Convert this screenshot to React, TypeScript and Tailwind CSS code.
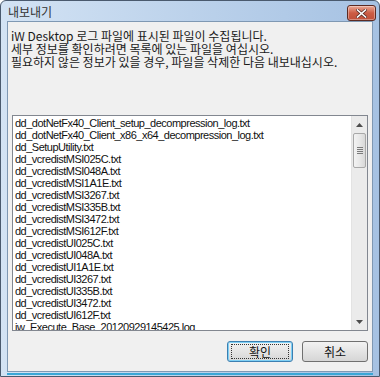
import React from 'react';

const files = [
  'dd_dotNetFx40_Client_setup_decompression_log.txt',
  'dd_dotNetFx40_Client_x86_x64_decompression_log.txt',
  'dd_SetupUtility.txt',
  'dd_vcredistMSI025C.txt',
  'dd_vcredistMSI048A.txt',
  'dd_vcredistMSI1A1E.txt',
  'dd_vcredistMSI3267.txt',
  'dd_vcredistMSI335B.txt',
  'dd_vcredistMSI3472.txt',
  'dd_vcredistMSI612F.txt',
  'dd_vcredistUI025C.txt',
  'dd_vcredistUI048A.txt',
  'dd_vcredistUI1A1E.txt',
  'dd_vcredistUI3267.txt',
  'dd_vcredistUI335B.txt',
  'dd_vcredistUI3472.txt',
  'dd_vcredistUI612F.txt',
  'iw_Execute_Base_20120929145425.log',
];

const korean = { fontFamily: '"Noto Sans CJK KR", sans-serif' };

function CloseButton() {
  return (
    <div className="absolute right-[3px] top-[4px] flex h-[16px] w-[29px] items-center justify-center rounded-[3px] border border-[#5c2a22] bg-gradient-to-b from-[#e9a896] via-[#cc5c44] to-[#c0503a] shadow-[inset_0_0_0_1px_rgba(255,255,255,0.35)]">
      <svg width="11" height="9" viewBox="0 0 11 9">
        <path d="M1.5 1 L9.5 8 M9.5 1 L1.5 8" stroke="#5a2d28" strokeWidth="3" strokeLinecap="square" />
        <path d="M1.5 1 L9.5 8 M9.5 1 L1.5 8" stroke="#ffffff" strokeWidth="1.6" strokeLinecap="square" />
      </svg>
    </div>
  );
}

function ScrollBar() {
  return (
    <div className="flex w-[16px] flex-col border-l border-[#e3e3e3] bg-[#ebebeb]">
      <div className="flex h-[17px] items-center justify-center">
        <svg width="7" height="4" viewBox="0 0 7 4">
          <path d="M0 4 L3.5 0 L7 4 Z" fill="#4d4d4d" />
        </svg>
      </div>
      <div className="mx-[1px] flex h-[35px] items-center justify-center rounded-[2px] border border-[#a8a8a8] bg-gradient-to-r from-[#f3f3f3] via-[#e8e8e8] to-[#d8d8d8]">
        <div className="flex flex-col gap-[1px]">
          <div className="h-[1px] w-[6px] bg-[#7a7a7a]" />
          <div className="h-[1px] w-[6px] bg-[#7a7a7a]" />
          <div className="h-[1px] w-[6px] bg-[#7a7a7a]" />
          <div className="h-[1px] w-[6px] bg-[#7a7a7a]" />
        </div>
      </div>
      <div className="flex-1" />
      <div className="flex h-[17px] items-center justify-center">
        <svg width="7" height="4" viewBox="0 0 7 4">
          <path d="M0 0 L7 0 L3.5 4 Z" fill="#4d4d4d" />
        </svg>
      </div>
    </div>
  );
}

export default function App() {
  return (
    <div
      className="relative h-[377px] w-[380px] overflow-hidden rounded-t-[6px] border border-[#4a5a6e] bg-gradient-to-r from-[#d3e3f4] via-[#bcd2eb] to-[#a6c2e3]"
      style={{ fontFamily: '"Liberation Sans", "Noto Sans CJK KR", sans-serif' }}
    >
      {/* title bar */}
      <div className="flex h-[20px] items-center pl-[7px] pt-[2px] text-[12px] text-[#333]" style={korean}>
        내보내기
      </div>
      <CloseButton />

      {/* client area */}
      <div className="mx-[6px] flex h-[351px] flex-col border border-[#7f98b3] bg-[#f0f0f0]">
        <div className="pl-[3px] pt-[7px] text-[12px] leading-[13px] text-[#1a1a1a]" style={korean}>
          <div className="h-[13px] whitespace-nowrap">iW Desktop 로그 파일에 표시된 파일이 수집됩니다.</div>
          <div className="h-[13px] whitespace-nowrap">세부 정보를 확인하려면 목록에 있는 파일을 여십시오.</div>
          <div className="h-[13px] whitespace-nowrap">필요하지 않은 정보가 있을 경우, 파일을 삭제한 다음 내보내십시오.</div>
        </div>

        <div className="ml-[4px] mr-[4px] mt-[47px] flex h-[216px] border border-[#828790] bg-white">
          <div className="flex-1 overflow-hidden pl-[2px] pt-[1px] text-[11px] leading-[12px] tracking-[-0.5px] text-[#111]">
            {files.map((f) => (
              <div key={f} className="h-[12px] whitespace-nowrap">
                {f}
              </div>
            ))}
          </div>
          <ScrollBar />
        </div>

        <div className="mt-[10px] flex justify-end gap-[9px] pr-[4px]">
          <div
            className="flex h-[21px] w-[66px] items-center justify-center rounded-[3px] border border-[#3c7fb1] bg-gradient-to-b from-[#f2f2f2] to-[#d6d6d6] text-[12px] text-[#111] shadow-[inset_0_0_0_1px_#7fd0f5]"
            style={korean}
          >
            <span className="flex h-[15px] w-[58px] items-center justify-center border border-dotted border-[#333]">확인</span>
          </div>
          <div
            className="flex h-[21px] w-[66px] items-center justify-center rounded-[3px] border border-[#707070] bg-gradient-to-b from-[#f2f2f2] to-[#d6d6d6] text-[12px] text-[#111]"
            style={korean}
          >
            취소
          </div>
        </div>
      </div>
      <div className="mx-[6px] mt-[1px] h-[2px] bg-[#3aa7d6]" />
    </div>
  );
}
